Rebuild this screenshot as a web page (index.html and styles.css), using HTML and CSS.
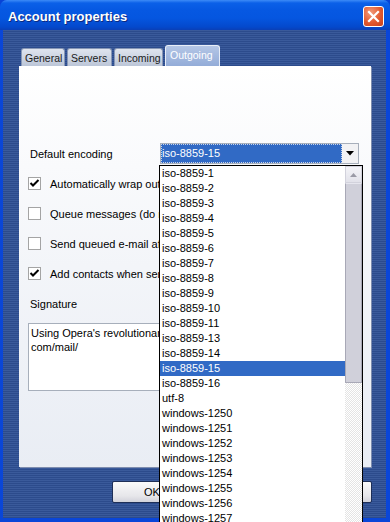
FILE: index.html
```html
<!DOCTYPE html>
<html lang="en">
<head>
    <meta charset="UTF-8">
    <meta name="viewport" content="width=device-width, initial-scale=1.0">
    <title>Account properties</title>
    <link rel="stylesheet" href="styles.css">
</head>
<body>
    <div class="window">
        <div class="titlebar">
            <span class="title">Account properties</span>
            <div class="close">
                <svg width="13" height="13" viewBox="0 0 13 13"><path d="M2 2 L11 11 M11 2 L2 11" stroke="#fff" stroke-width="2.2" stroke-linecap="square"/></svg>
            </div>
        </div>

        <div class="client">
            <div class="tabs">
                <div class="tab tab-general">General</div>
                <div class="tab tab-servers">Servers</div>
                <div class="tab tab-incoming">Incoming</div>
                <div class="tab tab-outgoing active">Outgoing</div>
            </div>

            <div class="panel">
                <div class="field-row">
                    <label class="field-label">Default encoding</label>
                    <div class="select">
                        <span class="select-value">iso-8859-15</span>
                        <span class="select-button">
                            <svg width="8" height="5" viewBox="0 0 8 5"><path d="M0 0 H8 L4 4.5 Z" fill="#000"/></svg>
                        </span>

                        <div class="dropdown">
                            <ul class="options">
                                <li>iso-8859-1</li>
                                <li>iso-8859-2</li>
                                <li>iso-8859-3</li>
                                <li>iso-8859-4</li>
                                <li>iso-8859-5</li>
                                <li>iso-8859-6</li>
                                <li>iso-8859-7</li>
                                <li>iso-8859-8</li>
                                <li>iso-8859-9</li>
                                <li>iso-8859-10</li>
                                <li>iso-8859-11</li>
                                <li>iso-8859-13</li>
                                <li>iso-8859-14</li>
                                <li class="selected">iso-8859-15</li>
                                <li>iso-8859-16</li>
                                <li>utf-8</li>
                                <li>windows-1250</li>
                                <li>windows-1251</li>
                                <li>windows-1252</li>
                                <li>windows-1253</li>
                                <li>windows-1254</li>
                                <li>windows-1255</li>
                                <li>windows-1256</li>
                                <li>windows-1257</li>
                            </ul>
                            <div class="scrollbar">
                                <div class="scroll-up">
                                    <svg width="7" height="4" viewBox="0 0 7 4"><path d="M0 4 H7 L3.5 0 Z" fill="#9a9aa6"/></svg>
                                </div>
                                <div class="scroll-thumb"></div>
                                <div class="scroll-track"></div>
                            </div>
                        </div>
                    </div>
                </div>

                <div class="check-row">
                    <span class="check">
                        <svg width="11" height="11" viewBox="0 0 11 11"><path d="M1.5 5 L4 7.5 L9.5 2" fill="none" stroke="#000" stroke-width="2"/></svg>
                    </span>
                    <span class="check-text">Automatically wrap outgoing text</span>
                </div>
                <div class="check-row">
                    <span class="check"></span>
                    <span class="check-text">Queue messages (do not send immediately)</span>
                </div>
                <div class="check-row">
                    <span class="check"></span>
                    <span class="check-text">Send queued e-mail after checking for new mail</span>
                </div>
                <div class="check-row">
                    <span class="check">
                        <svg width="11" height="11" viewBox="0 0 11 11"><path d="M1.5 5 L4 7.5 L9.5 2" fill="none" stroke="#000" stroke-width="2"/></svg>
                    </span>
                    <span class="check-text">Add contacts when sending mail</span>
                </div>

                <div class="sig-label">Signature</div>
                <div class="textarea">Using Opera's revolutionary e-mail client: http://www.opera.<br>com/mail/</div>
            </div>

            <div class="buttons">
                <div class="button">OK</div>
                <div class="button">Cancel</div>
                <div class="button">Help</div>
            </div>
        </div>
    </div>
</body>
</html>
```

FILE: styles.css
```css
* {
    box-sizing: border-box;
}
body {
    margin: 0;
    width: 390px;
    height: 522px;
    overflow: hidden;
    font-family: "Liberation Sans", Arial, sans-serif;
    font-size: 11px;
    color: #000;
    background: #0843d6;
}
.window {
    width: 390px;
    height: 522px;
    display: flex;
    flex-direction: column;
    background: #0a46d8;
    border-radius: 7px 7px 0 0;
}
.titlebar {
    height: 30px;
    flex: none;
    display: flex;
    align-items: center;
    justify-content: space-between;
    padding: 0 6px 0 8px;
    border-radius: 7px 7px 0 0;
    background: linear-gradient(#3d8bf7 0, #0b60e8 3px, #0658e2 10px, #0556e0 18px, #0449cc 27px, #0a3fb6 30px);
}
.title {
    color: #fff;
    font-weight: bold;
    font-size: 13px;
    text-shadow: 1px 1px 0 #0b2a80;
    margin-top: 2px;
}
.close {
    width: 21px;
    height: 21px;
    margin-top: 3px;
    border: 1px solid #fff;
    border-radius: 3px;
    background: radial-gradient(circle at 35% 30%, #f19a7a, #e2592f 55%, #c8401c);
    display: flex;
    align-items: center;
    justify-content: center;
}

/* client area with striped background */
.client {
    flex: 1;
    margin: 0 4px 4px 3px;
    padding: 15px 0 0 16px;
    background: repeating-linear-gradient(#3a5a9b 0 1px, #2c4b8c 1px 2px);
}
.tabs {
    display: flex;
    align-items: flex-end;
    gap: 2px;
    margin-left: 2px;
    height: 21px;
}
.tab {
    height: 18px;
    padding: 3px 0 0 3px;
    border: 1px solid #8797b6;
    border-bottom: none;
    border-radius: 3px 3px 0 0;
    background: linear-gradient(#dfe4ee, #bcc6d8);
    color: #1a1a1a;
    font-size: 10.5px;
    white-space: nowrap;
}
.tab-general { width: 44px; }
.tab-servers { width: 45px; }
.tab-incoming { width: 49px; }
.tab-outgoing { width: 55px; }
.tab.active {
    height: 21px;
    padding: 3px 0 0 4px;
    border-color: #e8eef8;
    background: linear-gradient(#b4c6e6, #93acd8);
    color: #fff;
}
.panel {
    width: 352px;
    height: 401px;
    padding: 77px 12px 0 9px;
    background: linear-gradient(#ffffff, #f3f5f9 50%, #e9edf4);
    box-shadow: 1px 1px 0 #7d8cae;
}
.field-row {
    display: flex;
    align-items: center;
    height: 21px;
}
.field-label {
    margin-left: 2px;
    margin-top: 1px;
}
.select {
    position: relative;
    margin-left: auto;
    width: 199px;
    height: 21px;
    display: flex;
    border: 1px solid #a7afbb;
    background: #fff;
}
.select-value {
    flex: 1;
    background: #316ac5;
    color: #fff;
    padding: 3px 0 0 1px;
    outline: 1px dotted #c8d4ea;
    outline-offset: -1px;
}
.select-button {
    width: 16px;
    display: flex;
    align-items: center;
    justify-content: center;
    background: #f2f2f4;
}

/* open list of encodings */
.dropdown {
    position: absolute;
    top: 21px;
    left: -2px;
    width: 204px;
    height: 380px;
    display: flex;
    border: 1px solid #000;
    background: #fff;
    z-index: 2;
}
.options {
    flex: 1;
    list-style: none;
    margin: 0;
    padding: 0;
}
.options li {
    height: 15px;
    line-height: 15px;
    padding-left: 2px;
    white-space: nowrap;
}
.options li.selected {
    background: #316ac5;
    color: #fff;
}
.scrollbar {
    width: 17px;
    display: flex;
    flex-direction: column;
}
.scroll-up {
    height: 17px;
    display: flex;
    align-items: center;
    justify-content: center;
    background: linear-gradient(#f4f4f8, #e2e2ea);
    border: 1px solid #d2d2dc;
}
.scroll-thumb {
    height: 200px;
    background: #d0d0da;
    border: 1px solid #a8a8b6;
    border-top-color: #e6e6ee;
}
.scroll-track {
    flex: 1;
    background: repeating-conic-gradient(#e4e4e4 0 25%, #fff 0 50%) 0 0 / 2px 2px;
}

.check-row {
    display: flex;
    align-items: center;
    gap: 9px;
    height: 13px;
    margin-top: 17px;
    white-space: nowrap;
}
.field-row + .check-row {
    margin-top: 13px;
}
.check {
    flex: none;
    width: 13px;
    height: 13px;
    border: 1px solid #a4a4a4;
    background: #fff;
    display: flex;
    align-items: center;
    justify-content: center;
}
.sig-label {
    margin-top: 18px;
    margin-left: 2px;
    line-height: 13px;
}
.textarea {
    margin-top: 12px;
    height: 68px;
    padding: 2px 0 0 2px;
    line-height: 14px;
    border: 1px solid #a7afbb;
    background: #fff;
    white-space: nowrap;
    overflow: hidden;
}
.buttons {
    display: flex;
    gap: 10px;
    margin: 14px 0 0 93px;
}
.button {
    width: 80px;
    height: 22px;
    line-height: 20px;
    text-align: center;
    border: 1px solid #1e2f57;
    border-radius: 2px;
    background: linear-gradient(#fafafa, #e6e6ea 70%, #d2d2da);
}
```
